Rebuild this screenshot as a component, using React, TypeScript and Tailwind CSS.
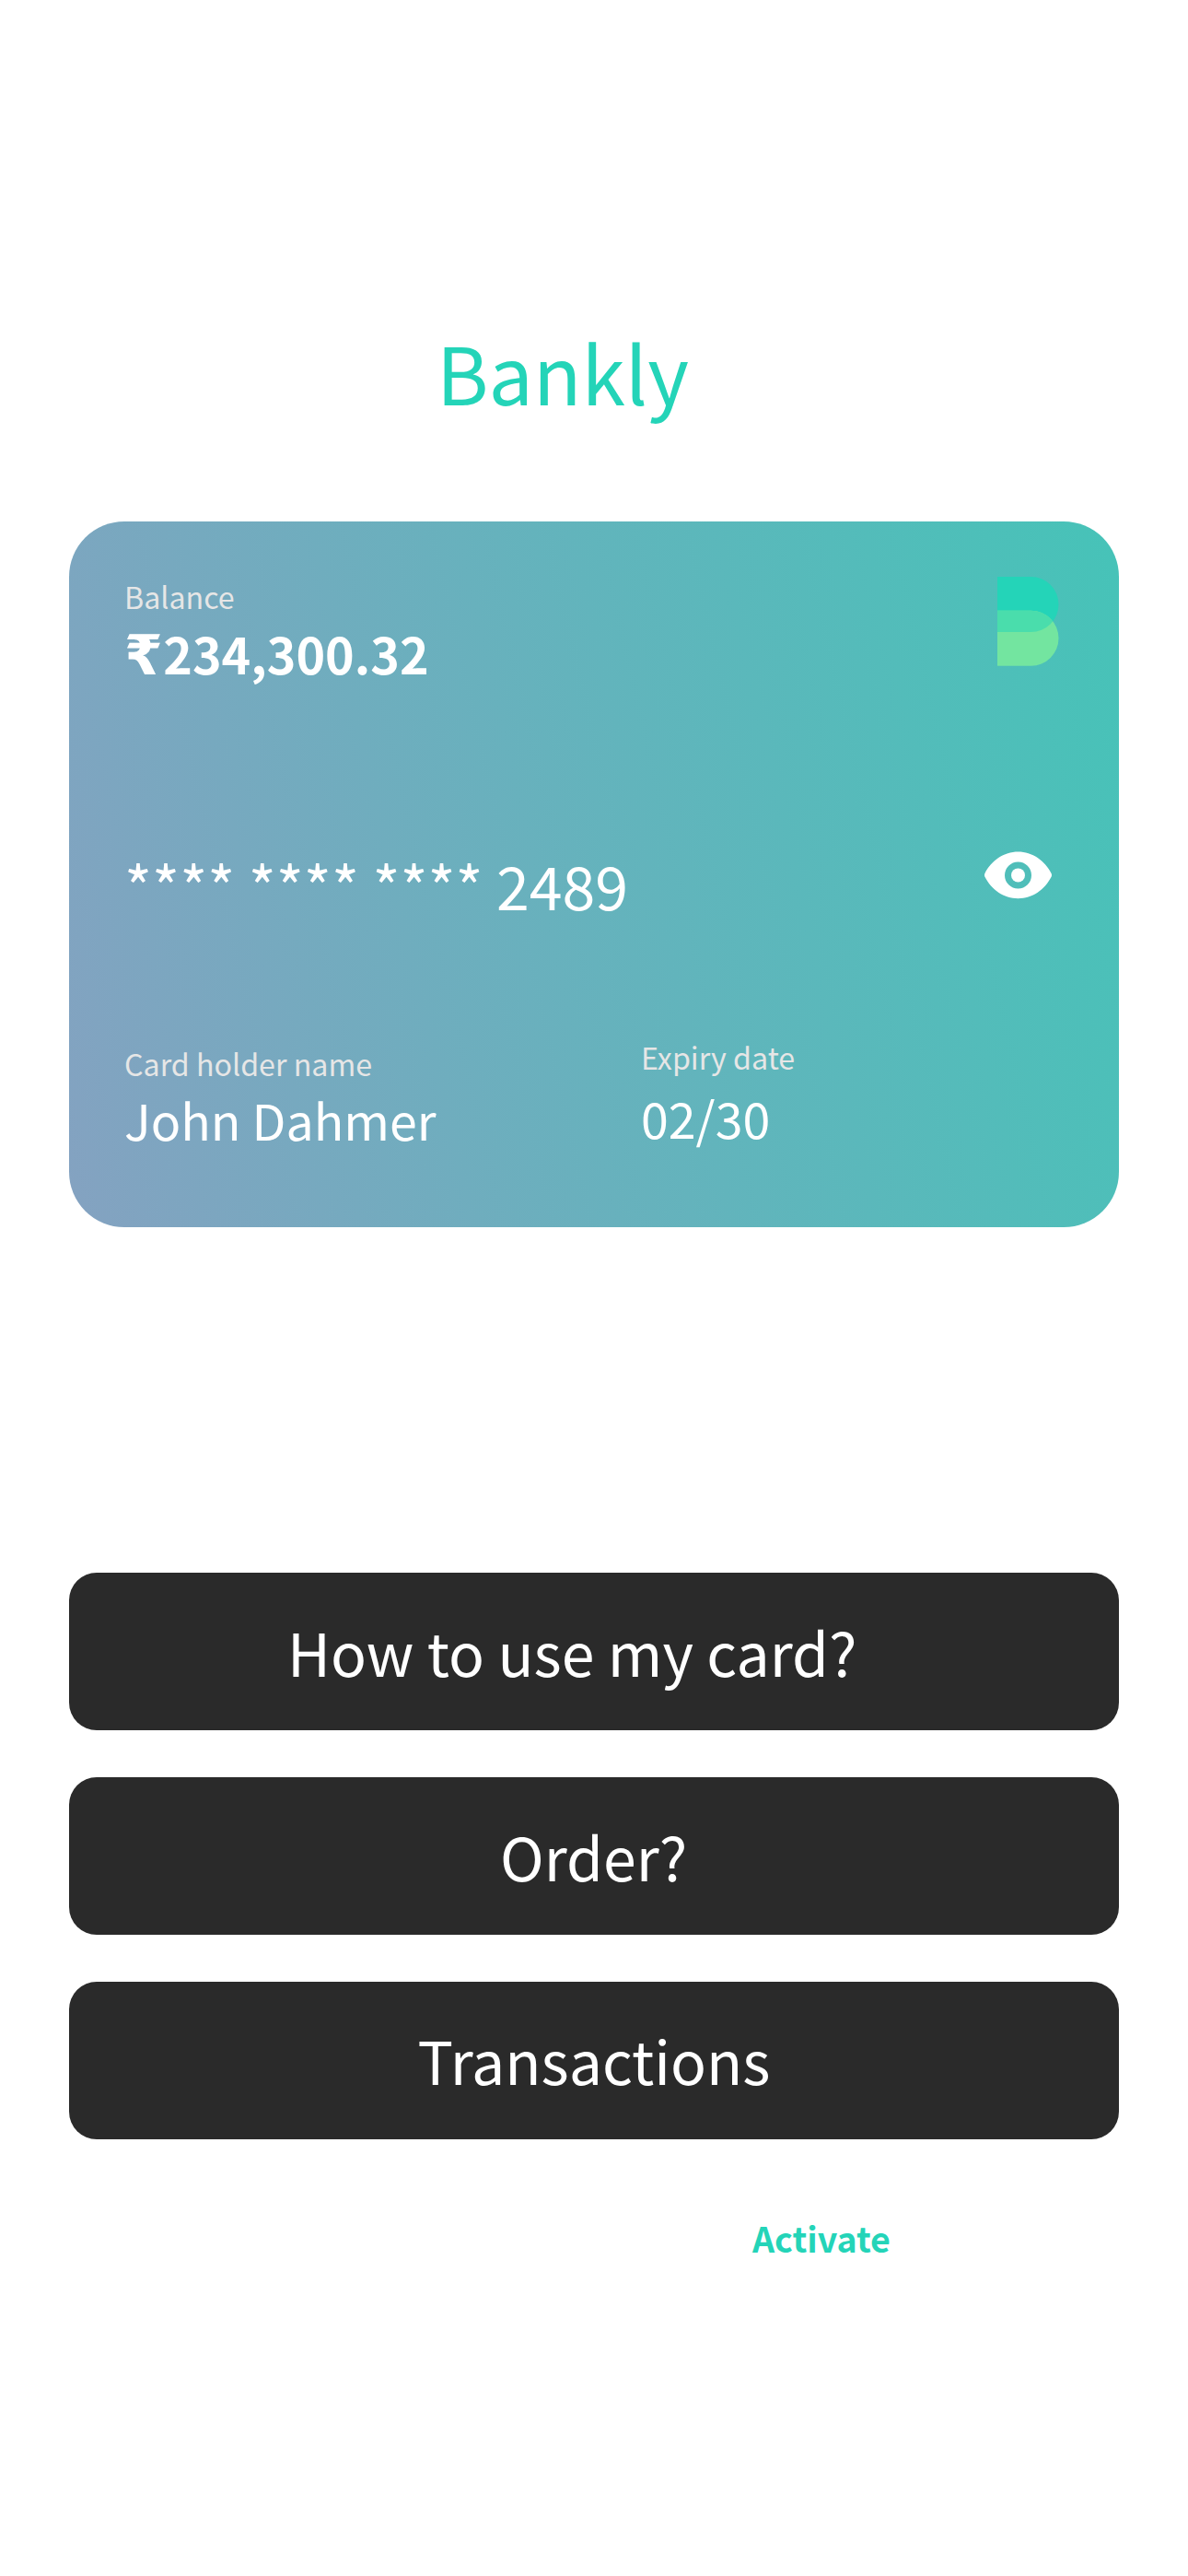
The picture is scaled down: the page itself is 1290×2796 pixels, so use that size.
function Logo() {
  return (
    <svg className="block h-[97px] w-[67px]" viewBox="0 0 67 97">
      <defs>
        <clipPath id="upper-lobe">
          <path d="M0 0H36.5A30 30 0 0 1 36.5 60H0Z" />
        </clipPath>
      </defs>
      <path d="M0 0H36.5A30 30 0 0 1 36.5 60H0Z" fill="#24D4B8" />
      <path d="M0 36.8H36.5A30 30 0 0 1 36.5 96.8H0Z" fill="#73E5A0" />
      <path d="M0 36.8H36.5A30 30 0 0 1 36.5 96.8H0Z" fill="#4ADDAC" clipPath="url(#upper-lobe)" />
    </svg>
  );
}

function EyeIcon() {
  return (
    <svg className="block h-[52px] w-[73px]" viewBox="0 0 73 52">
      <path
        fill="#fff"
        fillRule="evenodd"
        d="M0.3 24.2C7.5 10 21 0.5 36.5 0.5S65.5 10 72.7 24.2Q73.3 25.9 72.7 27.6C65.5 41.8 52 51.3 36.5 51.3S7.5 41.8 0.3 27.6Q-0.3 25.9 0.3 24.2ZM36.5 11.4A14.5 14.5 0 1 0 36.5 40.4A14.5 14.5 0 1 0 36.5 11.4Z"
      />
      <circle cx="36.5" cy="25.9" r="7.5" fill="#fff" />
    </svg>
  );
}

const actions = [
  { label: "How to use my card?", pad: "pl-[237px] pt-[49px]" },
  { label: "Order?", pad: "pl-[468px] pt-[49px]" },
  { label: "Transactions", pad: "pl-[378.5px] pt-[48px]" },
];

export default function App() {
  return (
    <main className="flex h-[2796px] w-[1290px] flex-col overflow-hidden bg-white px-[75px] pt-[355px] font-['Noto_Sans_CJK_SC','Noto_Sans',sans-serif] text-white">
      <h1 className="pl-[399px] text-[86px] leading-24 text-[#24D4B8]">Bankly</h1>

      <section className="mt-[115px] h-[765.5px] shrink-0 rounded-[60px] bg-[linear-gradient(77deg,#84A2C1_0%,#46C3B8_100%)] pr-[65px] pl-15">
        <div className="flex justify-between pt-[60px]">
          <div className="pt-[3px]">
            <p className="text-[32.2px] leading-9 text-[#E6E6E6]">Balance</p>
            <p className="mt-[14px] text-[53.7px] leading-[60px] font-bold">
              <span className="mr-[0.5px] font-['DejaVu_Sans'] text-[60px] leading-[0]">₹</span>234,300.32
            </p>
          </div>
          <Logo />
        </div>

        <div className="mt-[185px] flex h-[72px] items-start justify-between pr-[8px]">
          <p className="text-[64.4px] leading-[72px] whitespace-pre">**** **** **** 2489</p>
          <EyeIcon />
        </div>

        <div className="mt-[133px] flex">
          <div className="w-[561px] pt-[7px]">
            <p className="text-[32.2px] leading-9 text-[#E6E6E6]">Card holder name</p>
            <p className="mt-[13px] text-[53.7px] leading-[60px]">John Dahmer</p>
          </div>
          <div>
            <p className="text-[32.2px] leading-9 text-[#E6E6E6]">Expiry date</p>
            <p className="mt-[18px] text-[53.7px] leading-[60px]">02/30</p>
          </div>
        </div>
      </section>

      <nav className="mt-[375.5px] flex flex-col gap-[51px]">
        {actions.map(({ label, pad }) => (
          <button
            key={label}
            className={`flex h-[171px] items-start rounded-[30px] bg-[#2A2A2A] text-left text-[64.4px] leading-[72px] ${pad}`}
          >
            {label}
          </button>
        ))}
      </nav>

      <a className="mt-[86px] pl-[742px] text-[37.6px] leading-[42px] font-bold text-[#24D4B8]">Activate</a>
    </main>
  );
}
